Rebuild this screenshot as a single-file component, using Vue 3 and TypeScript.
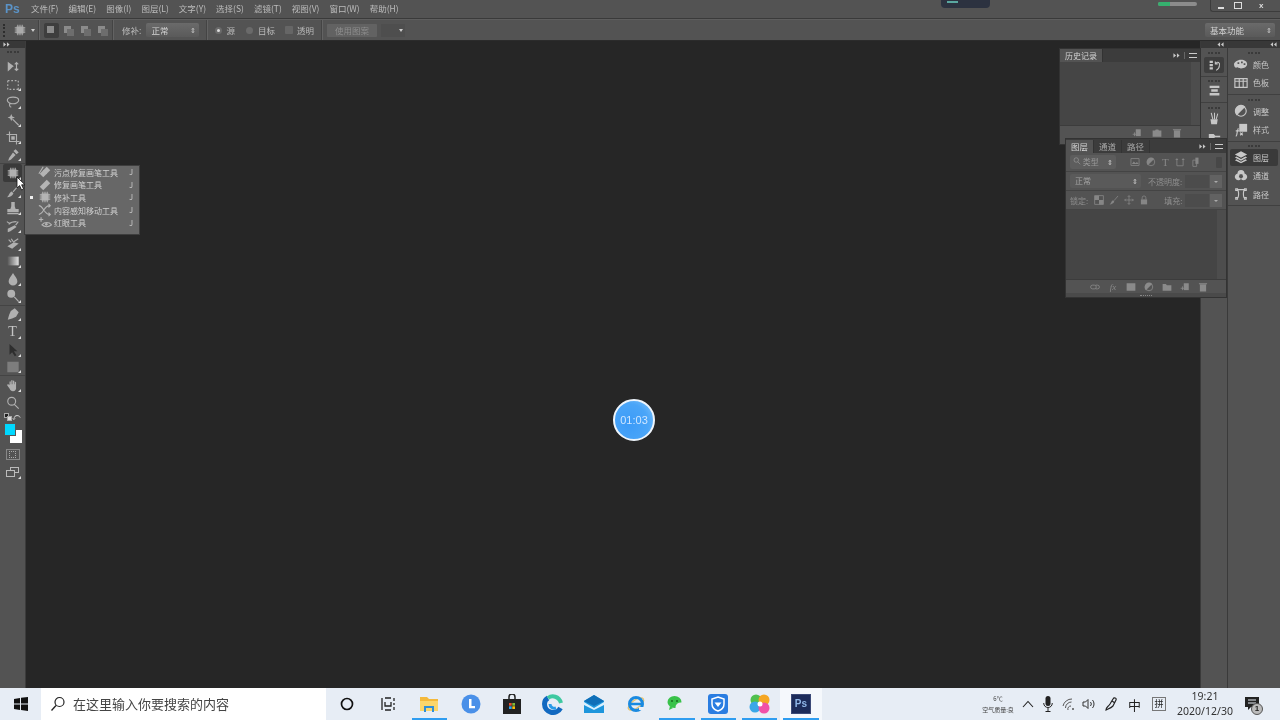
<template>
	<div class="app">
		<!-- menu bar -->
		<header class="menubar">
			<span class="ps-logo">Ps</span>
			<nav class="menus">
				<span v-for="m in menus" :key="m">{{ m }}</span>
			</nav>
			<div class="title-right">
				<div class="rec-pill"><i></i></div>
				<div class="progress"><i></i></div>
				<div class="win-btns">
					<span class="win-min"></span>
					<span class="win-max"><i></i></span>
					<span class="win-close">x</span>
				</div>
			</div>
		</header>

		<!-- options bar -->
		<section class="optbar">
			<div class="grip"></div>
			<Ic name="patch" :size="14" class="opt-tool" />
			<span class="caret"></span>
			<span class="sep s1"></span>
			<div class="modes">
				<span class="mode on"><i></i></span>
				<span class="mode"><i></i><i class="b"></i></span>
				<span class="mode"><i></i><i class="b"></i></span>
				<span class="mode"><i></i><i class="b"></i></span>
			</div>
			<span class="sep s2"></span>
			<span class="lbl patch-lbl">修补:</span>
			<div class="select patch-sel">正常</div>
			<span class="sep s3"></span>
			<span class="radio on r1"></span><span class="lbl src">源</span>
			<span class="radio r2"></span><span class="lbl dst">目标</span>
			<span class="check"></span><span class="lbl tr">透明</span>
			<span class="sep s3"></span>
			<div class="use-btn">使用图案</div>
			<div class="mini-sel"><span class="caret"></span></div>
			<div class="select workspace">基本功能</div>
		</section>

		<main class="work">
			<!-- tools -->
			<aside class="toolbar">
				<div class="bar-head"><Ic name="ff" :size="7" /></div>
				<div class="tools">
					<div class="tool-grip"></div>
					<div
						v-for="t in tools"
						:key="t.name"
						class="tool"
						:class="['tool-' + t.name, { active: t.name === 'patch', more: t.more, ruled: t.ruled }]"
					>
						<span v-if="t.name === 'type'" class="t-glyph">T</span>
						<Ic v-else :name="t.name" :size="14" />
					</div>
					<div class="swatch-row">
						<span class="defaults"><i></i><i></i></span>
						<span class="swap">⤺</span>
					</div>
					<div class="swatches"><i class="bg"></i><i class="fg"></i></div>
					<div class="tool"><span class="quick"><i></i></span></div>
					<div class="tool more"><span class="screen"><i></i><i></i></span></div>
				</div>
			</aside>

			<div class="canvas">
				<!-- flyout -->
				<div class="flyout">
					<div v-for="f in flyout" :key="f.label" class="fly-row">
						<span class="fly-dot" :class="{ on: f.on }"></span>
						<Ic :name="f.icon" :size="14" class="fly-ic" />
						<span class="fly-label">{{ f.label }}</span>
						<span class="fly-key">J</span>
					</div>
				</div>

				<!-- cursor -->
				<svg class="cursor" width="11" height="15" viewBox="0 0 11 15">
					<path d="M1 1v11l2.6-2.4L5.6 14l2-1-2-4.2H9z" fill="#fff" stroke="#111" stroke-width=".8" />
				</svg>

				<!-- timer -->
				<div class="timer"><span>01:03</span></div>

				<!-- history panel -->
				<div class="panel history">
					<div class="panel-tabs">
						<span class="tab active">历史记录</span>
						<span class="panel-menu"><Ic name="ff" :size="7" /><b></b><em></em></span>
					</div>
					<div class="panel-body"><div class="scroll-track"></div></div>
					<div class="panel-foot">
						<Ic name="newdoc" :size="10" />
						<Ic name="camera" :size="10" />
						<Ic name="trash" :size="10" />
					</div>
				</div>

				<!-- layers panel -->
				<div class="panel layers">
					<div class="panel-tabs">
						<span class="tab active">图层</span>
						<span class="tab">通道</span>
						<span class="tab">路径</span>
						<span class="panel-menu"><Ic name="ff" :size="7" /><b></b><em></em></span>
					</div>
					<div class="l-row filter">
						<div class="select kind"><Ic name="zoom" :size="8" /> 类型</div>
						<div class="filter-icons">
							<Ic name="image" :size="10" />
							<Ic name="half" :size="10" />
							<span class="t-small">T</span>
							<Ic name="frame" :size="10" />
							<Ic name="doc" :size="10" />
						</div>
						<span class="toggle"></span>
					</div>
					<div class="l-row">
						<div class="select blend">正常</div>
						<span class="lbl op">不透明度:</span>
						<div class="num-box"></div>
						<div class="num-arrow"></div>
					</div>
					<div class="l-row lock">
						<span class="lbl">锁定:</span>
						<div class="lock-icons">
							<Ic name="checker" :size="10" />
							<Ic name="brush" :size="10" />
							<Ic name="move4" :size="10" />
							<Ic name="lock" :size="10" />
						</div>
						<span class="lbl fillb">填充:</span>
						<div class="num-box"></div>
						<div class="num-arrow"></div>
					</div>
					<div class="panel-body"><div class="scroll-track"></div></div>
					<div class="panel-foot">
						<Ic name="link" :size="10" />
						<span class="fx">fx</span>
						<Ic name="mask" :size="10" />
						<Ic name="half" :size="10" />
						<Ic name="folder" :size="10" />
						<Ic name="newdoc" :size="10" />
						<Ic name="trash" :size="10" />
					</div>
					<div class="panel-end"><i></i></div>
				</div>
			</div>

			<!-- collapsed docks -->
			<aside class="dock narrow">
				<div class="bar-head right"><Ic name="rr" :size="7" /></div>
				<div class="dock-group g1"><div class="tool-grip"></div><div class="d-ic on"><Ic name="history" :size="13" /></div></div>
				<div class="dock-group g2"><div class="tool-grip"></div><div class="d-ic"><Ic name="props" :size="13" /></div></div>
				<div class="dock-group g3"><div class="tool-grip"></div><div class="d-ic"><Ic name="brushes" :size="13" /></div><div class="d-ic"><Ic name="wand2" :size="13" /></div></div>
			</aside>
			<aside class="dock wide">
				<div class="bar-head right"><Ic name="rr" :size="7" /></div>
				<div v-for="g in dockGroups" :key="g[0].label" class="dock-group wide-g">
					<div class="tool-grip"></div>
					<div v-for="d in g" :key="d.label" class="d-row" :class="{ on: d.on }">
						<Ic :name="d.icon" :size="14" />
						<span>{{ d.label }}</span>
					</div>
				</div>
			</aside>
		</main>

		<!-- windows taskbar -->
		<footer class="taskbar">
			<div class="start">
				<svg width="14" height="14" viewBox="0 0 14 14"><path d="M0 2l6-1v5.500H0zM7 .8L14 0v6.500H7zM0 7.500h6V13l-6-1zM7 7.500h7V14l-7-1z" fill="#111" /></svg>
			</div>
			<div class="search">
				<svg width="16" height="16" viewBox="0 0 16 16"><circle cx="9.500" cy="6" r="4.500" fill="none" stroke="#222" stroke-width="1.200" /><path d="M6 9.500L1.500 14.500" stroke="#222" stroke-width="1.300" /></svg>
				<span>在这里输入你要搜索的内容</span>
			</div>
			<div class="apps">
				<span class="app-ic"><svg width="14" height="14" viewBox="0 0 14 14"><circle cx="7" cy="7" r="5.500" fill="none" stroke="#111" stroke-width="1.700" /></svg></span>
				<span class="app-ic"><svg width="14" height="14" viewBox="0 0 14 14"><path d="M1 1v12M13 1v3M13 6v2M13 10v3M4 1h6M4 13h6M4 5v4h6V5" fill="none" stroke="#222" stroke-width="1.300" /></svg></span>
				<span class="app-ic open"><svg width="20" height="18" viewBox="0 0 20 18"><path d="M1 2h7l2 2h9v3H1z" fill="#f4b93b" /><path d="M1 6h18v10H1z" fill="#fbd66b" /><path d="M5 11h10v6h-2v-4H7v4H5z" fill="#2f8fd8" /></svg></span>
				<span class="app-ic"><svg width="20" height="20" viewBox="0 0 20 20"><circle cx="10" cy="10" r="9.500" fill="#4a90e8" /><path d="M8 5h2.500v7H14v2.300H8z" fill="#fff" /></svg></span>
				<span class="app-ic"><svg width="20" height="20" viewBox="0 0 20 20"><path d="M7 5V3a3 3 0 0 1 6 0v2" fill="none" stroke="#222" stroke-width="1.500" /><path d="M1 5h18v15H1z" fill="#222" /><path d="M7 9h2.700v2.700H7z" fill="#e8512f" /><path d="M10.300 9H13v2.700h-2.700z" fill="#7fbb38" /><path d="M7 12.300h2.700V15H7z" fill="#2aa3ee" /><path d="M10.300 12.300H13V15h-2.700z" fill="#fbbc09" /></svg></span>
				<span class="app-ic"><svg width="22" height="22" viewBox="0 0 22 22"><path d="M18.500 15A8.500 8.500 0 0 1 2.500 11C2.500 8 4 6 6 5" fill="none" stroke="#1269c0" stroke-width="5" /><path d="M6 5c4-3 11-2 13 5" fill="none" stroke="#3ec9a0" stroke-width="4" /><path d="M8 11c0 3 3 5 6 4" fill="none" stroke="#2a9be8" stroke-width="3" /></svg></span>
				<span class="app-ic"><svg width="20" height="18" viewBox="0 0 20 18"><path d="M0 6l10-6 10 6v12H0z" fill="#1e96dc" /><path d="M0 6l10-6 10 6-10 5z" fill="#0f6fb8" /><path d="M0 7l10 6 10-6v3l-10 5-10-5z" fill="#d8f0ff" /></svg></span>
				<span class="app-ic"><svg width="20" height="20" viewBox="0 0 20 20"><ellipse cx="10" cy="10" rx="9" ry="4" fill="none" stroke="#e8c26a" stroke-width="1.200" transform="rotate(-35 10 10)" /><circle cx="10" cy="10" r="6.500" fill="none" stroke="#1a8ae0" stroke-width="3" /><path d="M4 10h12" stroke="#1a8ae0" stroke-width="2.500" /><path d="M13 13h5v3h-5z" fill="#eaf0f8" /></svg></span>
				<span class="app-ic open"><svg width="20" height="18" viewBox="0 0 20 18"><ellipse cx="7.500" cy="7" rx="7" ry="6" fill="#39c24a" /><path d="M3 11l-1 4 4-2z" fill="#39c24a" /><ellipse cx="14" cy="12" rx="5.500" ry="4.500" fill="#e8edf2" /><circle cx="5" cy="6" r="1" fill="#1a6b22" /><circle cx="10" cy="6" r="1" fill="#1a6b22" /></svg></span>
				<span class="app-ic open"><svg width="20" height="20" viewBox="0 0 20 20"><rect width="20" height="20" rx="3" fill="#2a7de1" /><path d="M10 3l6 2v5c0 4-3 6-6 7-3-1-6-3-6-7V5z" fill="none" stroke="#fff" stroke-width="1.500" /><path d="M6.500 8.500L10 13l3.500-4.500z" fill="#fff" /></svg></span>
				<span class="app-ic open"><svg width="22" height="22" viewBox="0 0 22 22"><circle cx="7" cy="7" r="5.500" fill="#4fc04f" /><circle cx="15" cy="7" r="5.500" fill="#f5a623" /><circle cx="6" cy="14" r="5.500" fill="#3aa7e8" /><circle cx="15" cy="15" r="5.500" fill="#f050a8" /><circle cx="11" cy="11" r="2.500" fill="#fff" /></svg></span>
				<span class="app-ic open current"><span class="ps-tile">Ps</span></span>
			</div>
			<div class="tray">
				<div class="weather"><span>6℃</span><span>空气质量:良</span></div>
				<svg class="tr-ic chev" width="12" height="8" viewBox="0 0 12 8"><path d="M1 7l5-5.500L11 7" fill="none" stroke="#222" stroke-width="1.100" /></svg>
				<svg class="tr-ic mic" width="10" height="16" viewBox="0 0 10 16"><rect x="2.500" y="0" width="5" height="10" rx="2.500" fill="#222" /><path d="M.7 7c0 6 8.600 6 8.600 0M5 12v3M2.500 15.500h5" fill="none" stroke="#222" /></svg>
				<svg class="tr-ic wifi" width="14" height="13" viewBox="0 0 14 13"><path d="M1 8a9 9 0 0 1 9-7M3.500 10a6 6 0 0 1 6-6M6 12a3 3 0 0 1 3-4" fill="none" stroke="#555" /><circle cx="11" cy="11" r="1" fill="#555" /></svg>
				<svg class="tr-ic vol" width="14" height="12" viewBox="0 0 14 12"><path d="M1 4h2.500L6 1.500v9L3.500 8H1z" fill="none" stroke="#333" /><path d="M8.500 4a3 3 0 0 1 0 4M10.500 2a6 6 0 0 1 0 8" fill="none" stroke="#333" /></svg>
				<svg class="tr-ic pen" width="16" height="16" viewBox="0 0 16 16"><path d="M2 14c0-3 2-3 4-6l3-5c1-2 4-1 3 1L9 10c-2 2-5 3-7 4zM8 5l3 2" fill="none" stroke="#222" stroke-width="1.200" /></svg>
				<span class="zh">中</span>
				<span class="pin">拼</span>
				<div class="clock"><span>19:21</span><span>2020/12/30</span></div>
				<div class="notify">
					<svg width="14" height="14" viewBox="0 0 14 14"><path d="M0 0h14v10H6l-3 3v-3H0z" fill="#222" /><path d="M3 3h8M3 6h8" stroke="#e6ecf4" /></svg>
					<span class="badge">1</span>
				</div>
			</div>
		</footer>
	</div>
</template>

<script setup lang="ts">
import { defineComponent, h } from 'vue'

type Glyph = { f?: string; s?: string; grad?: boolean }

const glyphs: Record<string, Glyph> = {
	ff: { f: 'M1 3l6 5-6 5zM9 3l6 5-6 5z' },
	rr: { f: 'M7 3L1 8l6 5zM15 3L9 8l6 5z' },
	move: { f: 'M2 2v11l3-2.500L7.500 8 9 7z', s: 'M12 3v9M10 5l2-2 2 2M10 10l2 2 2-2' },
	marquee: { s: 'M2 3h2M6 3h2M10 3h2M14 3v2M14 7v2M14 11v2h-2M10 13H8M6 13H4M2 13v-2M2 9V7M2 5V3' },
	lasso: { s: 'M8 2.500c4 0 6.500 1.500 6.500 3.500S11.500 10 8 10 1.500 8 1.500 6 4 2.500 8 2.500zM5 9.500c-1.500 1-1.500 3.500 1 4.500' },
	wand: { f: 'M6 1l1.200 3 3 1.200-3 1.200L6 9.500 4.800 6.400l-3-1.200 3-1.200z', s: 'M7.500 7l7 7' },
	crop: { f: 'M6 6h4v4H6z', s: 'M4 .5v11.500h11.500M.5 4h11.500v11.500' },
	dropper: { f: 'M11 1.500l3.500 3.500-2.500 2-3.500-3.500zM8 5l3 3-5.500 5.500-3 1 1-3z' },
	patch: { f: 'M4 4h8v8H4z', s: 'M2 5.500h12M2 8h12M2 10.500h12M5.500 2v12M8 2v12M10.500 2v12' },
	brush: { f: 'M6.500 8.500l2 2c-1 3-4 4.500-7.500 4.500 2.500-1 2.500-5.500 5.500-6.500z', s: 'M14.500 1.500L8 9' },
	stamp: { f: 'M6 1h4v5l1 3h3.500v3.500h-13V9H5l1-3zM1.500 13.500h13V15h-13z' },
	histbrush: { f: 'M2 11l8-4 2 2-7 5-3 1z', s: 'M3 6c2-2 6-3 9-3M11 7l3-4M1 3l3 2' },
	eraser: { f: 'M1.500 10.500L9 6l5.500 1.500L7 13.500z', s: 'M3 3l3 3M6 2l2 3M8 6l6-4' },
	gradient: { f: 'M1.500 3h13v10h-13z', grad: true },
	drop: { f: 'M8 1c2 3.500 5 6 5 9.500a5 5 0 0 1-10 0C3 7 6 4.500 8 1z' },
	dodge: { f: 'M1.500 5.500a4.500 4.500 0 1 0 9 0 4.500 4.500 0 1 0-9 0z', s: 'M9.500 9l5 5.500' },
	pen: { f: 'M10 1.500l4.500 4.500-3 5-4.500 2-5 1.500L3.500 9l2-4.500z' },
	path: { f: 'M4 1v12.500l3-3 3 4.500 2-1-3-4.500h4z' },
	rect: { f: 'M1.500 2h13v12h-13z' },
	hand: { f: 'M4 8V4.500c0-1 1.500-1 1.500 0V7h.5V3c0-1 1.500-1 1.500 0v4H8V3.500c0-1 1.500-1 1.500 0V7h.5V5c0-1 1.500-1 1.500 0v5.500C12 13 10.500 15 8 15c-2 0-3-1-4-3L1.500 8.500c-.5-1 .8-1.800 1.500-1z' },
	zoom: { s: 'M2 6a4.500 4.500 0 1 0 9 0 4.500 4.500 0 1 0-9 0zM9.500 9.500l5 5' },
	healing: { f: 'M10 2l4 4-8 8-4-4z', s: 'M6 6l4 4M1 10l5-8' },
	bandage: { f: 'M10 2l4 4-8 8-4-4z' },
	content: { s: 'M1 3c5 0 6 10 12 10M1 13c5 0 6-10 12-10M12 1l2 2-2 2M12 11l2 2-2 2' },
	redeye: { f: 'M8 9.500a1.500 1.500 0 1 0 3 0 1.500 1.500 0 1 0-3 0z', s: 'M1 4h5M3.500 1.500v5M4.500 10c3-3.500 8-3.500 11 0-3 3-8 3-11 0z' },
	history: { f: 'M2 2h4v3H2zM2 6h4v3H2zM2 10h4v3H2z', s: 'M9 6c3-4 6-1 5 2M9 3v3h3M14 8c0 3-2 5-4 6' },
	props: { f: 'M2 2h12v3H2zM2 11h12v3H2zM4 6.500h8v3H4z' },
	brushes: { f: 'M3 9h9l-1 6H4z', s: 'M4 1l2 8M8 1v8M12 2L10 9' },
	wand2: { f: 'M1 5h6l2 2 6 0v2H8.500L7 11H1z' },
	palette: { f: 'M8 3c4 0 7 2 7 5s-3 5-7 5-3-2-5-1-3-2-3-4 4-5 8-5zM4 6h2v2H4zM8 5h2v2H8zM11 7h2v2h-2z' },
	swatches: { s: 'M1 3h14v10H1zM1 6h14M6 3v10M10.500 3v10' },
	half: { f: 'M3 13A7 7 0 0 1 13 3z', s: 'M2 8a6 6 0 1 0 12 0 6 6 0 1 0-12 0z' },
	fxbox: { f: 'M6 1h9v9H6z', s: 'M2 15c2 0 1-6 3-9M2 9h4M7 11l3 3M10 11l-3 3' },
	layers: { f: 'M8 1.500l7 3.700-7 3.700-7-3.700zM1 8.500l2 -1 5 2.700 5-2.700 2 1-7 3.700zM1 11.700l2-1 5 2.700 5-2.700 2 1-7 3.300z' },
	channels: { f: 'M8 1a4 4 0 0 1 4 4 4 4 0 1 1-4 6.500A4 4 0 1 1 4 5a4 4 0 0 1 4-4zM6.500 6h3l1 3-2.500 2-2.500-2z' },
	paths: { s: 'M3 3c3 0 3 10 0 10M13 3c-3 0-3 10 0 10M3 3h10M2 2h2v2H2zM12 2h2v2h-2zM2 12h2v2H2zM12 12h2v2h-2z' },
	newdoc: { f: 'M6 2h8v11H6z', s: 'M1 10h6M4 7v6' },
	camera: { f: 'M1 4h4l1-1.500h4L11 4h4v10H1z' },
	trash: { f: 'M3 4h10v11H3zM1.500 2h13v1.500h-13z' },
	image: { s: 'M1.500 2.500h13v11h-13z', f: 'M3 11l3-4 3 3 2-2 3 3z' },
	frame: { s: 'M3 2v12h10V2M1 4h4M11 4h4' },
	doc: { f: 'M7 1h5v10H7z', s: 'M3 5h6v10H3z' },
	checker: { f: 'M1 1h7v7H1zM8 8h7v7H8z', s: 'M1 1h14v14H1z' },
	move4: { s: 'M8 1v14M1 8h14M6 3l2-2 2 2M6 13l2 2 2-2M3 6L1 8l2 2M13 6l2 2-2 2' },
	lock: { f: 'M3 7h10v8H3z', s: 'M5 7V4.500a3 3 0 0 1 6 0V7' },
	link: { s: 'M1 8a3 3 0 0 1 3-3h3a3 3 0 0 1 0 6H4a3 3 0 0 1-3-3zM9 5h3a3 3 0 0 1 0 6H9' },
	mask: { f: 'M1 2h14v12H1z' },
	folder: { f: 'M1 3h5l2 2h7v9H1z' },
}

// small svg icon, colours come from currentColor
const Ic = defineComponent({
	name: 'Ic',
	props: {
		name: { type: String, required: true },
		size: { type: Number, default: 13 },
	},
	setup(props) {
		return () => {
			const g = glyphs[props.name] ?? {}
			const kids = []
			if (g.grad) {
				kids.push(
					h('defs', [
						h('linearGradient', { id: 'tool-grad' }, [
							h('stop', { offset: '0', 'stop-color': '#555' }),
							h('stop', { offset: '1', 'stop-color': '#e0e0e0' }),
						]),
					])
				)
			}
			if (g.f) kids.push(h('path', { d: g.f, fill: g.grad ? 'url(#tool-grad)' : 'currentColor', 'fill-rule': 'evenodd' }))
			if (g.s) kids.push(h('path', { d: g.s, fill: 'none', stroke: 'currentColor', 'stroke-width': 1.3 }))
			return h('svg', { width: props.size, height: props.size, viewBox: '0 0 16 16' }, kids)
		}
	},
})

const menus = ['文件(F)', '编辑(E)', '图像(I)', '图层(L)', '文字(Y)', '选择(S)', '滤镜(T)', '视图(V)', '窗口(W)', '帮助(H)']

const tools = [
	{ name: 'move' },
	{ name: 'marquee', more: true },
	{ name: 'lasso', more: true },
	{ name: 'wand', more: true },
	{ name: 'crop', more: true },
	{ name: 'dropper', more: true, ruled: true },
	{ name: 'patch', more: true },
	{ name: 'brush', more: true },
	{ name: 'stamp', more: true },
	{ name: 'histbrush', more: true },
	{ name: 'eraser', more: true },
	{ name: 'gradient', more: true },
	{ name: 'drop', more: true },
	{ name: 'dodge', more: true, ruled: true },
	{ name: 'pen', more: true },
	{ name: 'type', more: true },
	{ name: 'path', more: true },
	{ name: 'rect', more: true, ruled: true },
	{ name: 'hand', more: true },
	{ name: 'zoom' },
]

const flyout = [
	{ label: '污点修复画笔工具', icon: 'healing' },
	{ label: '修复画笔工具', icon: 'bandage' },
	{ label: '修补工具', icon: 'patch', on: true },
	{ label: '内容感知移动工具', icon: 'content' },
	{ label: '红眼工具', icon: 'redeye' },
]

const dockGroups = [
	[
		{ label: '颜色', icon: 'palette' },
		{ label: '色板', icon: 'swatches' },
	],
	[
		{ label: '调整', icon: 'half' },
		{ label: '样式', icon: 'fxbox' },
	],
	[
		{ label: '图层', icon: 'layers', on: true },
		{ label: '通道', icon: 'channels' },
		{ label: '路径', icon: 'paths' },
	],
]
</script>

<style>
html,
body {
	margin: 0;
	background: #262626;
	overflow: hidden;
}
</style>

<style scoped>
.app {
	width: 1280px;
	height: 720px;
	display: flex;
	flex-direction: column;
	overflow: hidden;
	font-family: 'Noto Sans CJK SC', 'Liberation Sans', sans-serif;
	font-size: 8.500px;
	color: #bcbcbc;
	background: #535353;
	filter: blur(0.35px);
}

/* menu bar */
.menubar {
	height: 18px;
	display: flex;
	align-items: center;
	background: #535353;
	border-bottom: 1px solid #3a3a3a;
	flex: none;
}
.ps-logo {
	width: 31px;
	padding-left: 5px;
	box-sizing: border-box;
	font: bold 12px 'Liberation Sans', sans-serif;
	color: #5b93c7;
}
.menus {
	display: flex;
	gap: 10px;
}
.menus span {
	line-height: 16px;
	padding-bottom: 2px;
	white-space: nowrap;
}
.title-right {
	margin-left: auto;
	display: flex;
	align-self: flex-start;
}
.rec-pill {
	width: 49px;
	height: 8px;
	background: #2c3240;
	border-radius: 0 0 4px 4px;
	margin-right: 168px;
	padding: 1px 6px;
	box-sizing: border-box;
}
.rec-pill i {
	display: block;
	width: 11px;
	height: 2px;
	background: #5aa7a0;
}
.progress {
	width: 39px;
	height: 4px;
	background: #8c8c8c;
	border-radius: 2px;
	margin: 2px 13px 0 0;
	overflow: hidden;
}
.progress i {
	display: block;
	width: 12px;
	height: 4px;
	background: #35b06e;
}
.win-btns {
	width: 70px;
	height: 12px;
	display: flex;
	align-items: center;
	padding-left: 7px;
	border: 1px solid #3c3c3c;
	border-top: 0;
	border-right: 0;
	border-radius: 0 0 0 3px;
	box-sizing: border-box;
	color: #ddd;
	font: bold 8px/10px 'Liberation Sans', sans-serif;
}
.win-min {
	width: 6px;
	height: 2px;
	margin-top: 4px;
	background: #ddd;
}
.win-max {
	margin-left: 10px;
}
.win-max i {
	display: block;
	width: 6px;
	height: 5px;
	border: 1px solid #ddd;
}
.win-close {
	margin-left: 17px;
}

/* options bar */
.optbar {
	height: 22px;
	flex: none;
	display: flex;
	align-items: center;
	background: #535353;
	border-top: 1px solid #5e5e5e;
	border-bottom: 1px solid #2b2b2b;
	box-sizing: border-box;
	padding-left: 3px;
}
.grip {
	width: 2px;
	height: 13px;
	border-left: 2px dotted #2d2d2d;
	margin-right: 6px;
}
.opt-tool {
	color: #aaa;
}
.caret {
	width: 0;
	height: 0;
	border: 2.500px solid transparent;
	border-top: 3px solid #ccc;
	border-bottom: 0;
	margin-left: 4px;
}
.sep {
	width: 1px;
	height: 20px;
	background: #444;
	box-shadow: 1px 0 0 #636363;
}
.s1 {
	margin-left: 3px;
}
.s2 {
	margin-left: 2px;
}
.s3 {
	margin-left: 7px;
}
.modes {
	display: flex;
	margin-left: 5px;
	gap: 2px;
}
.mode {
	width: 15px;
	height: 15px;
	position: relative;
	display: block;
}
.mode.on {
	background: #3e3e3e;
	border-radius: 2px;
}
.mode i {
	position: absolute;
	left: 3px;
	top: 3px;
	width: 7px;
	height: 7px;
	background: #8b8b8b;
}
.mode i.b {
	left: 6px;
	top: 6px;
	background: #6d6d6d;
}
.lbl {
	white-space: nowrap;
}
.patch-lbl {
	margin-left: 9px;
}
.select {
	position: relative;
	height: 14px;
	line-height: 14px;
	background: linear-gradient(#6a6a6a, #5a5a5a);
	border-radius: 2px;
	padding-left: 5px;
	box-sizing: border-box;
	color: #d2d2d2;
}
.select::after {
	content: '⇕';
	position: absolute;
	right: 3px;
	top: 0;
	font-size: 7px;
	color: #ccc;
}
.patch-sel {
	width: 53px;
	margin-left: 5px;
}
.radio {
	width: 7px;
	height: 7px;
	border-radius: 50%;
	background: #6a6a6a;
	box-sizing: border-box;
}
.r1 {
	margin-left: 8px;
}
.r2 {
	margin-left: 11px;
}
.radio.on {
	border: 2px solid #6a6a6a;
	background: #ddd;
}
.src {
	margin-left: 4px;
}
.dst {
	margin-left: 5px;
}
.check {
	width: 8px;
	height: 8px;
	background: #666;
	border-radius: 1px;
	margin-left: 10px;
}
.tr {
	margin-left: 4px;
}
.use-btn {
	width: 50px;
	height: 13px;
	line-height: 13px;
	margin-left: 5px;
	text-align: center;
	background: #626262;
	color: #8e8e8e;
	border-radius: 1px;
}
.mini-sel {
	width: 24px;
	height: 13px;
	margin-left: 4px;
	background: #4e4e4e;
	display: flex;
	align-items: center;
	justify-content: flex-end;
	padding-right: 2px;
	box-sizing: border-box;
}
.workspace {
	margin-left: auto;
	margin-right: 5px;
	width: 70px;
	text-align: left;
}

/* work area */
.work {
	flex: 1;
	display: flex;
	min-height: 0;
	background: #262626;
}
.toolbar {
	width: 26px;
	flex: none;
	background: #535353;
	border-right: 1px solid #3c3c3c;
	box-sizing: border-box;
}
.bar-head {
	height: 7px;
	background: #383838;
	color: #c8c8c8;
	padding-left: 3px;
	display: flex;
	align-items: center;
}
.bar-head.right {
	justify-content: flex-end;
	padding: 0 3px 0 0;
}
.tool-grip {
	height: 2px;
	margin: 0 auto 2px;
	width: 12px;
	border-top: 2px dotted #3a3a3a;
	box-sizing: border-box;
}
.tools {
	padding-top: 3px;
}
.tools > .tool-grip {
	margin-bottom: 5px;
}
.tool {
	height: 17.700px;
	display: flex;
	align-items: center;
	justify-content: center;
	color: #b0b0b0;
	position: relative;
	box-sizing: border-box;
}
.tool.active {
	background: #3a3a3a;
	border-radius: 2px;
	margin: 0 3px;
}
.tool.more::after {
	content: '';
	position: absolute;
	right: 4px;
	bottom: 2px;
	border-left: 3px solid transparent;
	border-bottom: 3px solid #ddd;
}
.tool.active.more::after {
	right: 1px;
}
.tool.ruled {
	border-bottom: 1px solid #444;
}
.tool-path {
	color: #2e2e2e;
}
.tool-rect {
	color: #7d7d7d;
}
.t-glyph {
	font: 14px/14px 'Liberation Serif', serif;
	color: #c4c4c4;
}
.swatch-row {
	height: 10px;
	display: flex;
	justify-content: space-between;
	align-items: center;
	padding: 0 4px;
}
.defaults {
	width: 8px;
	height: 8px;
	position: relative;
	display: block;
}
.defaults i {
	position: absolute;
	width: 5px;
	height: 5px;
	background: #222;
	border: 1px solid #aaa;
	box-sizing: border-box;
}
.defaults i + i {
	left: 3px;
	top: 3px;
	background: #ddd;
}
.swap {
	font-size: 8px;
	line-height: 8px;
	color: #ccc;
}
.swatches {
	height: 20px;
	position: relative;
	margin: 1px 0 3px;
}
.swatches i {
	position: absolute;
	width: 12px;
	height: 13px;
}
.swatches .bg {
	left: 10px;
	top: 7px;
	background: #fff;
}
.swatches .fg {
	left: 4px;
	top: 0;
	background: #00d8ff;
	border: 1px solid #555;
	box-sizing: border-box;
}
.quick {
	width: 12px;
	height: 9px;
	border: 1px solid #888;
	display: flex;
	align-items: center;
	justify-content: center;
}
.quick i {
	width: 5px;
	height: 5px;
	border: 1px dotted #aaa;
}
.screen {
	width: 13px;
	height: 10px;
	position: relative;
	display: block;
}
.screen i {
	position: absolute;
	left: 4px;
	top: 0;
	width: 9px;
	height: 6px;
	border: 1px solid #bbb;
	box-sizing: border-box;
}
.screen i + i {
	left: 0;
	top: 3px;
	height: 7px;
	background: #535353;
}

.canvas {
	flex: 1;
	position: relative;
	background: #262626;
}

/* flyout menu */
.flyout {
	position: absolute;
	left: -1px;
	top: 125px;
	width: 114px;
	height: 68px;
	box-sizing: border-box;
	background: #676767;
	box-shadow: 0 0 0 1px #3e3e3e;
	font-size: 8px;
	z-index: 3;
}
.fly-row {
	height: 12.600px;
	display: flex;
	align-items: center;
	color: #d0d0d0;
	white-space: nowrap;
}
.fly-dot {
	width: 3px;
	height: 3px;
	margin-left: 5px;
}
.fly-dot.on {
	background: #eee;
}
.fly-ic {
	margin-left: 5px;
	color: #b4b4b4;
}
.fly-label {
	margin-left: 2px;
}
.fly-key {
	margin-left: auto;
	margin-right: 6px;
	font-size: 7px;
}
.cursor {
	position: absolute;
	left: -10px;
	top: 135px;
	z-index: 4;
}

/* recording timer */
.timer {
	position: absolute;
	left: 587px;
	top: 358px;
	width: 42px;
	height: 42px;
	border-radius: 50%;
	box-sizing: border-box;
	border: 2px solid #eef5fc;
	background: radial-gradient(circle at 35% 60%, #3c9bf8, #4aa5f8 60%, #86c6fa);
	display: flex;
	align-items: center;
	justify-content: center;
	color: #cfe6ff;
	font: 11px 'Liberation Sans', sans-serif;
}

/* floating panels */
.panel {
	position: absolute;
	background: #535353;
	display: flex;
	flex-direction: column;
	box-shadow: 0 0 0 1px #333;
	font-size: 8px;
}
.history {
	left: 1034px;
	top: 8px;
	width: 140px;
	height: 95px;
}
.layers {
	left: 1040px;
	top: 98px;
	width: 160px;
	height: 158px;
	z-index: 2;
}
.panel-tabs {
	height: 13px;
	flex: none;
	display: flex;
	background: #3c3c3c;
}
.layers .panel-tabs {
	height: 14px;
	padding-top: 1px;
	box-sizing: border-box;
}
.tab {
	padding: 0 5px;
	line-height: 13px;
	border-right: 1px solid #333;
	color: #a8a8a8;
}
.layers .tab {
	font-size: 8.500px;
}
.tab.active {
	background: #535353;
	color: #d4d4d4;
}
.panel-menu {
	margin-left: auto;
	display: flex;
	align-items: center;
	gap: 4px;
	padding-right: 3px;
	color: #c8c8c8;
}
.panel-menu b {
	width: 1px;
	height: 7px;
	background: #666;
}
.panel-menu em {
	width: 8px;
	height: 3px;
	border-top: 1px solid #ccc;
	border-bottom: 1px solid #ccc;
}
.panel-body {
	flex: 1;
	background: #454545;
	display: flex;
	justify-content: flex-end;
	border-bottom: 1px solid #3c3c3c;
}
.scroll-track {
	width: 9px;
	background: #4d4d4d;
}
.panel-foot {
	height: 13px;
	flex: none;
	display: flex;
	align-items: center;
	justify-content: flex-end;
	gap: 8px;
	padding-right: 18px;
	color: #8a8a8a;
	background: #535353;
}
.history .panel-foot {
	margin-bottom: 5px;
	gap: 10px;
}
.l-row {
	height: 19px;
	flex: none;
	display: flex;
	align-items: center;
	padding: 0 4px;
	box-sizing: border-box;
	border-bottom: 1px solid #444;
	color: #8f8f8f;
}
.kind {
	width: 46px;
	color: #999;
	padding-left: 3px;
	background: #5d5d5d;
}
.filter-icons,
.lock-icons {
	display: flex;
	align-items: center;
	gap: 5px;
	color: #868686;
}
.filter-icons {
	margin-left: 14px;
	gap: 6px;
}
.t-small {
	font: 11px/11px 'Liberation Serif', serif;
}
.toggle {
	width: 6px;
	height: 11px;
	margin-left: auto;
	background: #474747;
	border-radius: 1px;
}
.blend {
	width: 71px;
	background: #5a5a5a;
	color: #a6a6a6;
}
.op {
	margin-left: 7px;
}
.num-box {
	flex: 1;
	height: 13px;
	margin-left: 3px;
	background: #4c4c4c;
}
.num-arrow {
	width: 12px;
	height: 13px;
	background: #626262;
	margin-left: 1px;
	position: relative;
}
.num-arrow::after {
	content: '';
	position: absolute;
	left: 4px;
	top: 6px;
	border: 2px solid transparent;
	border-top: 2px solid #aaa;
	border-bottom: 0;
}
.lock-icons {
	margin-left: 6px;
}
.fillb {
	margin-left: 15px;
}
.fx {
	width: 10px;
	text-align: center;
	font: italic 9px 'Liberation Serif', serif;
}
.panel-end {
	height: 4px;
	flex: none;
	background: #4a4a4a;
	display: flex;
	justify-content: center;
	align-items: center;
}
.panel-end i {
	width: 12px;
	border-top: 1px dotted #888;
}

/* docks */
.dock {
	flex: none;
	background: #535353;
	border-left: 1px solid #3a3a3a;
	box-sizing: border-box;
	font-size: 8px;
}
.narrow {
	width: 27px;
}
.wide {
	width: 53px;
}
.dock-group {
	border-bottom: 1px solid #404040;
	box-sizing: border-box;
	padding-top: 4px;
}
.g1 {
	height: 29px;
}
.g1 .tool-grip {
	margin-bottom: 3px;
}
.g2 {
	height: 26px;
	padding-top: 3px;
}
.g2 .tool-grip {
	margin-bottom: 0;
}
.g3 {
	height: 41px;
}
.g3 .tool-grip {
	margin-bottom: 1px;
}
.d-ic {
	height: 16px;
	margin: 0 3px 2px;
	display: flex;
	align-items: center;
	justify-content: center;
	color: #c6c6c6;
}
.d-ic.on {
	background: #3e3e3e;
	border-radius: 2px;
}
.wide-g {
	height: 47px;
}
.wide-g:last-child {
	height: 64px;
	padding-top: 3px;
}
.d-row {
	height: 16.500px;
	margin: 0 2px 2px;
	display: flex;
	align-items: center;
	gap: 5px;
	padding-left: 4px;
	color: #c8c8c8;
}
.d-row.on {
	background: #3a3a3a;
	border-radius: 2px;
}
.d-row span {
	white-space: nowrap;
}

/* taskbar */
.taskbar {
	height: 32px;
	flex: none;
	display: flex;
	background: #e7edf5;
	color: #222;
}
.start {
	width: 41px;
	display: flex;
	align-items: center;
	justify-content: center;
}
.search {
	width: 285px;
	background: #fff;
	display: flex;
	align-items: center;
	box-sizing: border-box;
	padding: 0 0 1px 9px;
	gap: 7px;
	font-size: 13px;
	color: #444;
}
.apps {
	display: flex;
}
.app-ic {
	width: 41.300px;
	height: 32px;
	display: flex;
	align-items: center;
	justify-content: center;
	position: relative;
	box-sizing: border-box;
}
.app-ic.open::after {
	content: '';
	position: absolute;
	left: 3px;
	right: 3px;
	bottom: 0;
	height: 2px;
	background: #2f9df0;
}
.app-ic.current {
	background: #f5f8fc;
}
.ps-tile {
	width: 18px;
	height: 18px;
	background: #1c2b5a;
	color: #8fb6e8;
	font: bold 10px/18px 'Liberation Sans', sans-serif;
	text-align: center;
	box-shadow: 0 0 0 1px #3c4a78;
}
.tray {
	margin-left: auto;
	display: flex;
	align-items: center;
	width: 300px;
}
.weather {
	width: 36px;
	display: flex;
	flex-direction: column;
	align-items: center;
	font-size: 6px;
	line-height: 11px;
	color: #444;
	white-space: nowrap;
}
.tr-ic {
	flex: none;
}
.chev {
	margin-left: 6px;
}
.mic {
	margin-left: 9px;
}
.wifi {
	margin-left: 9px;
}
.vol {
	margin-left: 6px;
}
.pen {
	margin-left: 8px;
}
.zh {
	font-size: 13px;
	margin-left: 8px;
}
.pin {
	width: 12px;
	height: 12px;
	border: 1px solid #777;
	font-size: 9px;
	line-height: 12px;
	text-align: center;
	margin-left: 11px;
}
.clock {
	width: 62px;
	margin-left: 8px;
	display: flex;
	flex-direction: column;
	align-items: center;
	font: 10.500px/15px 'Noto Sans', sans-serif;
	color: #333;
}
.notify {
	margin-left: 9px;
	position: relative;
	width: 18px;
	display: flex;
}
.badge {
	position: absolute;
	left: 6px;
	top: 6px;
	width: 12px;
	height: 12px;
	border-radius: 50%;
	background: #bbb;
	border: 1px solid #555;
	box-sizing: border-box;
	font: bold 8px/10px 'Liberation Sans', sans-serif;
	text-align: center;
}
</style>
